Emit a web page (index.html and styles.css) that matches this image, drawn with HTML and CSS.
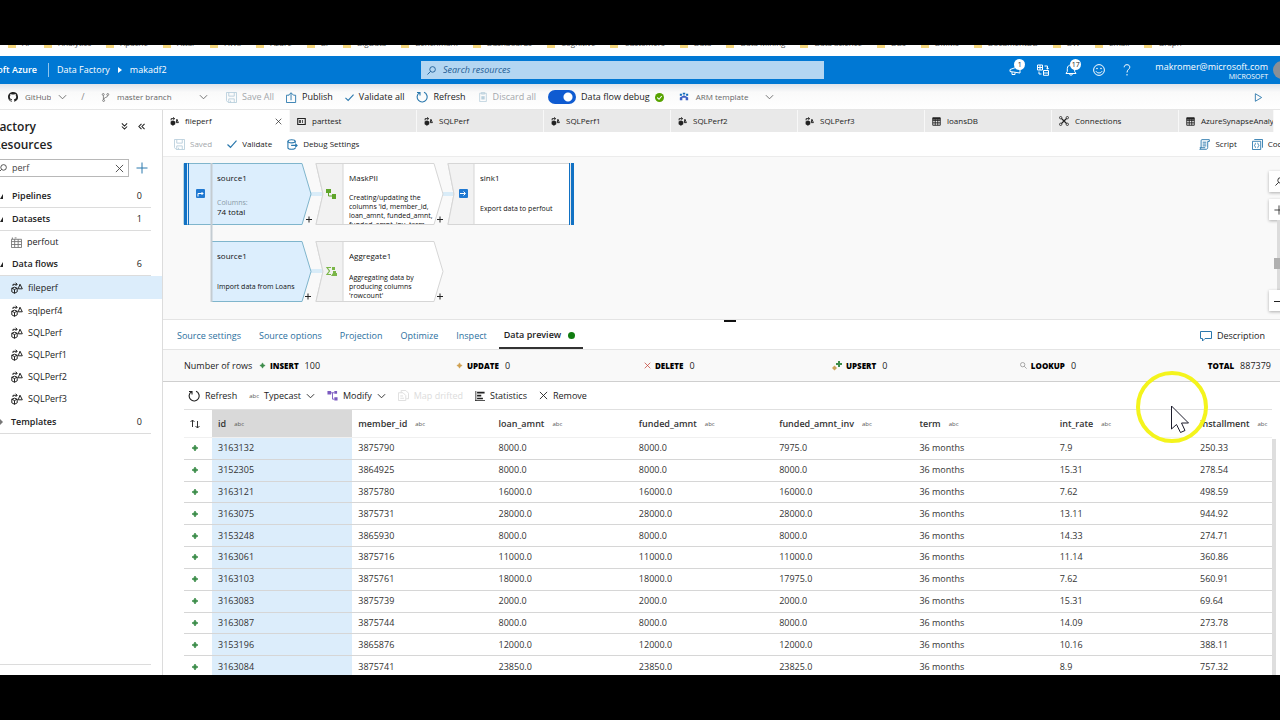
FILE: index.html
```html
<!DOCTYPE html>
<html lang="en">
<head>
  <meta charset="UTF-8">
  <meta name="viewport" content="width=device-width, initial-scale=1.0">
  <title>makadf2 - Data Factory</title>
  <link rel="stylesheet" href="styles.css">
</head>
<body>
  <!-- Icon set -->
  <svg class="sprite" aria-hidden="true">
    <symbol id="i-chevron" viewBox="0 0 10 6"><path d="M1 1l4 4 4-4" fill="none" stroke="currentColor"/></symbol>
    <symbol id="i-close" viewBox="0 0 10 10"><path d="M1 1l8 8M9 1L1 9" fill="none" stroke="currentColor"/></symbol>
    <symbol id="i-check" viewBox="0 0 10 8"><path d="M.5 4.5l3 2.8L9.5.7" fill="none" stroke="currentColor" stroke-width="1.2"/></symbol>
    <symbol id="i-save" viewBox="0 0 12 12"><path d="M.5.5h11v11h-9l-2-2zM3 .5v4h6v-4M3 11.5v-4h6v4M5 9.500v2" fill="none" stroke="currentColor"/></symbol>
    <symbol id="i-search" viewBox="0 0 10 10"><circle cx="6.200" cy="3.800" r="3.100" fill="none" stroke="currentColor"/><path d="M4 6L.5 9.500" stroke="currentColor"/></symbol>
    <symbol id="i-refresh" viewBox="0 0 12 12"><path d="M3.500 1.700A5 5 0 1 0 8 1.300M1 1.500h3v3" fill="none" stroke="currentColor" stroke-width="1.100"/></symbol>
    <symbol id="i-github" viewBox="0 0 16 16"><path fill="currentColor" fill-rule="evenodd" d="M8 0C3.580 0 0 3.580 0 8c0 3.540 2.290 6.530 5.470 7.590.4.070.550-.170.550-.380v-1.490c-2.010.370-2.530-.490-2.690-.940-.090-.230-.480-.940-.820-1.130-.280-.150-.680-.520-.010-.530.630-.010 1.080.580 1.230.820.720 1.210 1.870.870 2.330.660.070-.520.280-.870.510-1.070-1.780-.2-3.640-.890-3.640-3.950 0-.870.310-1.590.820-2.150-.080-.2-.360-1.020.080-2.120 0 0 .670-.210 2.200.820a7.600 7.600 0 0 1 4 0c1.530-1.040 2.200-.820 2.200-.820.440 1.100.160 1.920.080 2.120.510.560.820 1.270.820 2.150 0 3.070-1.870 3.750-3.650 3.950.290.250.540.730.540 1.480v2.200c0 .210.150.460.550.380A8 8 0 0 0 8 0z"/></symbol>
    <symbol id="i-branch" viewBox="0 0 10 12"><g fill="none" stroke="currentColor"><circle cx="2" cy="2" r="1.300"/><circle cx="8" cy="2" r="1.300"/><circle cx="2.500" cy="10" r="1.300"/><path d="M2.200 3.500v5M8 3.500C8 6.500 3 5 2.500 8.500"/></g></symbol>
    <symbol id="i-publish" viewBox="0 0 12 12"><path d="M3.500 3.500h-3v8h10v-8h-2.500M5.500 9V1M3 3.300L5.500.8 8 3.300" fill="none" stroke="currentColor"/></symbol>
    <symbol id="i-discard" viewBox="0 0 10 12"><path d="M1 1.500h8v10H1zM3 .5h4v2H3z" fill="none" stroke="currentColor"/><path d="M3 5h4v4H3z" fill="currentColor"/></symbol>
    <symbol id="i-flow" viewBox="0 0 12 12"><g fill="none" stroke="currentColor"><path d="M.8 6.200l2.700-1 2.700 1v3.600l-2.700 1.500-2.700-1.500zM.8 6.200l2.700 1.300 2.700-1.300M3.500 7.500v3.800M2 4V2.300h4M4.600.7L6.200 2.300 4.600 3.900M9 2.200l2.300 4.600H7.200z"/></g></symbol>
    <symbol id="i-flow-solid" viewBox="0 0 12 12"><path d="M.8 6l3-1.200L7 6v3.800l-3.200 1.700-3-1.700z" fill="currentColor"/><path d="M1.500 4.500V2.200h4M4.300.5L6.300 2.200 4.300 4M9.200 3l2 4.500H8.300z" fill="none" stroke="currentColor" stroke-width="1.300"/></symbol>
    <symbol id="i-pipe" viewBox="0 0 12 10"><path d="M1 1h10v8H1z" fill="none" stroke="currentColor" stroke-width="1.500"/><path d="M3 3h2v4H3zM7 3h1v4H7z" fill="currentColor"/></symbol>
    <symbol id="i-grid" viewBox="0 0 12 12"><path d="M1 1h10v10H1zM1 4.500h10M1 7.800h10M4.300 3v8M7.700 3v8" fill="none" stroke="currentColor" stroke-width="1.200"/><path d="M1 1h10v2.500H1z" fill="currentColor"/></symbol>
    <symbol id="i-table" viewBox="0 0 12 12"><path d="M.5 2.500h11v9H.5zM.5 5h11M.5 8.200h11M4 2.500v9M7.800 2.500v9M1.500.500v2M4 1h2" fill="none" stroke="currentColor"/></symbol>
    <symbol id="i-connect" viewBox="0 0 12 12"><g fill="none" stroke="currentColor"><circle cx="2" cy="2" r="1.400"/><circle cx="10" cy="2" r="1.400"/><circle cx="2" cy="10" r="1.400"/><circle cx="10" cy="10" r="1.400"/><path stroke-width="1.400" d="M3 3l6 6M9 3L3 9"/></g></symbol>
    <symbol id="i-debug" viewBox="0 0 12 12"><g fill="none" stroke="currentColor" stroke-width="1.200"><ellipse cx="5" cy="2.500" rx="4" ry="1.700"/><path d="M1 2.500v7c0 1 1.800 1.700 4 1.700s4-.7 4-1.700M9 2.500V4M4.500 7h6.500M9 5l2 2-2 2"/></g></symbol>
    <symbol id="i-script" viewBox="0 0 12 12"><path d="M3 .7h8.300v2H9.500v6.500c0 1.300-.8 2-1.800 2H.8c.8-.4 1.500-1 1.500-2V2C2.300 1.200 2.500.7 3 .7zM4 3.500h4M4 5.500h4M4 7.500h4M.8 9.500h6" fill="none" stroke="currentColor"/></symbol>
    <symbol id="i-code" viewBox="0 0 12 12"><path d="M2.500.500h9v9M.5 2.500h9v9h-9zM4.200 4.500c-1 0-.5 1.700-1.500 2.500 1 .8.500 2.500 1.500 2.500M6 4.500c1 0 .5 1.700 1.500 2.500-1 .8-.5 2.500-1.500 2.500" fill="none" stroke="currentColor"/></symbol>
    <symbol id="i-plus" viewBox="0 0 12 12"><path d="M6 .5v11M.5 6h11" stroke="currentColor"/></symbol>
    <symbol id="i-star" viewBox="0 0 8 8"><path d="M4 1l1 2 2 1-2 1-1 2-1-2-2-1 2-1z" fill="currentColor" stroke="currentColor" stroke-width=".8"/></symbol>
    <symbol id="i-modify" viewBox="0 0 12 12"><path d="M.5 1h4v4h-4zM8 1h3v3H8zM8 8h3.500v3.500H8z" fill="currentColor"/><path d="M4.500 3H8M6 3v7h2" fill="none" stroke="currentColor"/></symbol>
    <symbol id="i-map" viewBox="0 0 12 12"><path d="M3.500 3V.500h5l3 3v6H9M.5 3h5L8.500 6v5.500h-8zM2.500 6.500h3M2.500 9h4" fill="none" stroke="currentColor"/></symbol>
    <symbol id="i-stats" viewBox="0 0 12 12"><path d="M1 0v12M0 11.500h12" stroke="currentColor"/><path d="M2.500 1h9v2h-9zM2.500 4.500h5v2h-5zM2.500 8h7v2h-7z" fill="currentColor"/></symbol>
    <symbol id="i-chat" viewBox="0 0 12 12"><path d="M.5 1.500h11v7H5L2.500 11V8.500h-2z" fill="none" stroke="currentColor"/></symbol>
  </svg>

  <div class="app">
    <nav class="bookmarks" aria-label="Bookmarks">
      <a href="#">AI</a><a href="#">Analytics</a><a href="#">Apache</a><a href="#">Attar</a><a href="#">AWS</a><a href="#">Azure</a><a href="#">BI</a><a href="#">BigData</a><a href="#">Benchmark</a><a href="#">Dashboards</a><a href="#">Cognitive</a><a href="#">Customers</a><a href="#">Data</a><a href="#">Data Mining</a><a href="#">Data Science</a><a href="#">DBs</a><a href="#">DMMs</a><a href="#">DocumentDB</a><a href="#">DW</a><a href="#">Email</a><a href="#">Graph</a>
    </nav>

    <header class="topbar">
      <div class="brand">
        <a class="brand-name" href="#">Microsoft Azure</a>
        <a class="crumb" href="#">Data Factory</a>
        <svg class="crumb-arrow" viewBox="0 0 4 6"><path d="M0 0l4 3-4 3z" fill="#fff"/></svg>
        <a href="#">makadf2</a>
      </div>
      <label class="top-search">
        <svg class="ic-9"><use href="#i-search"/></svg>
        <input type="text" placeholder="Search resources" aria-label="Search resources">
      </label>
      <div class="top-icons">
        <button type="button" aria-label="Announcements">
          <svg class="ic-12" viewBox="0 0 12 12"><path d="M1 5.500L11 2v7L1 7.500zM3 8v2.500h3V8.300" fill="none" stroke="currentColor"/></svg>
          <span class="badge">1</span>
        </button>
        <button type="button" aria-label="Switch factory">
          <svg class="ic-12" viewBox="0 0 12 12"><path d="M.5 1h5v5h-5zM.5 3.500h5M3 1v5M6.500 6.500h5v4.800h-5zM6.500 9h5M7.500 2h3v3M9.300 4l1.200 1.200L11.700 4M4.500 10H2V7.500" fill="none" stroke="currentColor"/></svg>
        </button>
        <button type="button" aria-label="Notifications">
          <svg class="ic-12" viewBox="0 0 12 12"><path d="M1 9.500h10L9.700 7.500V4.500C9.700 2.200 8 1 6 1S2.300 2.200 2.300 4.500v3zM4.500 10c.3 1.600 2.700 1.600 3 0" fill="none" stroke="currentColor"/></svg>
          <span class="badge">17</span>
        </button>
        <button type="button" aria-label="Feedback">
          <svg class="ic-12" viewBox="0 0 12 12"><circle cx="6" cy="6" r="5.400" fill="none" stroke="currentColor"/><path d="M3 7.300c1 2.200 5 2.200 6 0" fill="none" stroke="currentColor"/><circle cx="4" cy="4.500" r=".8" fill="currentColor"/><circle cx="8" cy="4.500" r=".8" fill="currentColor"/></svg>
        </button>
        <button type="button" aria-label="Help">
          <svg class="ic-12" viewBox="0 0 12 12"><path d="M3.200 3.300C3.200 1.500 4.300.7 6 .7s2.800 1 2.800 2.500C8.800 5.200 6 5.500 6 8.500M6 10v1.500" fill="none" stroke="currentColor"/></svg>
        </button>
      </div>
      <div class="account">
        <span>makromer@microsoft.com</span>
        <span class="tenant">MICROSOFT</span>
      </div>
      <span class="avatar"></span>
    </header>

    <div class="factory-bar">
      <label class="picker repo">
        <svg class="ic-10"><use href="#i-github"/></svg>
        <select aria-label="Repository"><option>GitHub</option></select>
        <svg class="ic-chev"><use href="#i-chevron"/></svg>
      </label>
      <span class="slash">/</span>
      <label class="picker branch">
        <svg class="ic-9"><use href="#i-branch"/></svg>
        <select aria-label="Branch"><option>master branch</option></select>
        <svg class="ic-chev"><use href="#i-chevron"/></svg>
      </label>
      <button type="button" class="cmd off" disabled><svg class="ic-11"><use href="#i-save"/></svg>Save All</button>
      <button type="button" class="cmd"><svg class="ic-11 blue"><use href="#i-publish"/></svg>Publish</button>
      <button type="button" class="cmd"><svg class="ic-9 blue"><use href="#i-check"/></svg>Validate all</button>
      <button type="button" class="cmd"><svg class="ic-12 blue"><use href="#i-refresh"/></svg>Refresh</button>
      <button type="button" class="cmd off" disabled><svg class="ic-10"><use href="#i-discard"/></svg>Discard all</button>
      <label class="toggle"><input type="checkbox" checked>Data flow debug
        <svg class="ic-9" viewBox="0 0 10 10"><circle cx="5" cy="5" r="5" fill="#57a300"/><path d="M2.500 5l2 2 3-3.700" fill="none" stroke="#fff" stroke-width="1.200"/></svg>
      </label>
      <button type="button" class="cmd arm">
        <svg class="ic-10" viewBox="0 0 12 12"><path d="M1 2h2.500v2.500H1zM8.500 2H11v2.500H8.500zM4.500 1h3v2h-3z" fill="#0f6cbd"/><path d="M1 10V6.500L6 4l5 2.500V10H8V7H4v3z" fill="#3b5fc4"/></svg>
        ARM template
        <svg class="ic-chev"><use href="#i-chevron"/></svg>
      </button>
      <button type="button" class="play" aria-label="Play"><svg class="ic-9" viewBox="0 0 10 10"><path d="M1.500.8l7 4.200-7 4.200z" fill="none" stroke="currentColor"/></svg></button>
    </div>

    <div class="workspace">
      <aside class="sidebar">
        <div class="side-head">
          <h1>Factory Resources</h1>
          <button type="button" aria-label="Expand all"><svg class="ic-7" viewBox="0 0 8 8"><path d="M1 .5l3 3 3-3M1 4l3 3 3-3" fill="none" stroke="currentColor" stroke-width="1.200"/></svg></button>
          <button type="button" aria-label="Collapse"><svg class="ic-7" viewBox="0 0 8 8"><path d="M4 1L1 4l3 3M7.500 1l-3 3 3 3" fill="none" stroke="currentColor" stroke-width="1.200"/></svg></button>
        </div>
        <div class="side-search">
          <div class="filter">
            <svg class="ic-9"><use href="#i-search"/></svg>
            <input type="text" value="perf" aria-label="Filter resources">
            <button type="button" aria-label="Clear"><svg class="ic-9"><use href="#i-close"/></svg></button>
          </div>
          <button type="button" class="add" aria-label="Add resource"><svg class="ic-12"><use href="#i-plus"/></svg></button>
        </div>
        <div class="tree">
          <div class="group">Pipelines <span>0</span></div>
          <div class="group">Datasets <span>1</span></div>
          <a class="item" href="#"><svg class="ic-11 muted"><use href="#i-table"/></svg>perfout</a>
          <div class="group">Data flows <span>6</span></div>
          <a class="item selected" href="#"><svg class="ic-12"><use href="#i-flow"/></svg>fileperf</a>
          <a class="item" href="#"><svg class="ic-12"><use href="#i-flow"/></svg>sqlperf4</a>
          <a class="item" href="#"><svg class="ic-12"><use href="#i-flow"/></svg>SQLPerf</a>
          <a class="item" href="#"><svg class="ic-12"><use href="#i-flow"/></svg>SQLPerf1</a>
          <a class="item" href="#"><svg class="ic-12"><use href="#i-flow"/></svg>SQLPerf2</a>
          <a class="item" href="#"><svg class="ic-12"><use href="#i-flow"/></svg>SQLPerf3</a>
          <div class="group closed">Templates <span>0</span></div>
        </div>
        <div class="side-foot"></div>
      </aside>

      <main>
        <nav class="tabs">
          <a class="tab active" href="#"><svg class="ic-9"><use href="#i-flow-solid"/></svg>fileperf<svg class="ic-7 tab-close"><use href="#i-close"/></svg></a>
          <a class="tab" href="#"><svg class="ic-9"><use href="#i-pipe"/></svg>parttest</a>
          <a class="tab" href="#"><svg class="ic-9"><use href="#i-flow-solid"/></svg>SQLPerf</a>
          <a class="tab" href="#"><svg class="ic-9"><use href="#i-flow-solid"/></svg>SQLPerf1</a>
          <a class="tab" href="#"><svg class="ic-9"><use href="#i-flow-solid"/></svg>SQLPerf2</a>
          <a class="tab" href="#"><svg class="ic-9"><use href="#i-flow-solid"/></svg>SQLPerf3</a>
          <a class="tab" href="#"><svg class="ic-9"><use href="#i-grid"/></svg>loansDB</a>
          <a class="tab" href="#"><svg class="ic-10"><use href="#i-connect"/></svg>Connections</a>
          <a class="tab last" href="#"><svg class="ic-9"><use href="#i-grid"/></svg>AzureSynapseAnaly</a>
        </nav>

        <div class="flow-bar">
          <button type="button" class="cmd off" disabled><svg class="ic-11"><use href="#i-save"/></svg>Saved</button>
          <button type="button" class="cmd"><svg class="ic-10 blue"><use href="#i-check"/></svg>Validate</button>
          <button type="button" class="cmd"><svg class="ic-11 blue"><use href="#i-debug"/></svg>Debug Settings</button>
          <span class="spacer"></span>
          <button type="button" class="cmd"><svg class="ic-11 blue"><use href="#i-script"/></svg>Script</button>
          <button type="button" class="cmd"><svg class="ic-11 blue"><use href="#i-code"/></svg>Code</button>
        </div>

        <section class="canvas">
          <svg class="graph" width="420" height="160" viewBox="0 0 420 160">
            <path d="M147 37h14M279 37h14M147 114h14" stroke="#d9ecf8" stroke-width="4"/>
            <path d="M21 6.500h118l9 30.500-9 30.500H21z" fill="#dceefd" stroke="#7fb5cc"/>
            <path d="M21 6h3v62h-3zM25 6h1v62h-1z" fill="#1272c4"/>
            <path d="M48.500 84.500H139l9 30-9 30H48.500z" fill="#dceefd" stroke="#7fb5cc"/>
            <path d="M48.500 6v139" stroke="#c4ccd2" stroke-width="2"/>
            <path d="M153 6.500h118l9 30.500-9 30.500H153l7-30.500z" fill="#fff" stroke="#d6d6d6"/>
            <path d="M153 6.500h27v61h-27l7-30.500z" fill="#f2f2f2" stroke="#d6d6d6"/>
            <path d="M153 84.500h118l9 30-9 30H153l7-30z" fill="#fff" stroke="#d6d6d6"/>
            <path d="M153 84.500h27v60h-27l7-30z" fill="#f2f2f2" stroke="#d6d6d6"/>
            <path d="M285 6.500h122v61H285l6-30.500z" fill="#fff" stroke="#d6d6d6"/>
            <path d="M285 6.500h26v61h-26l6-30.500z" fill="#f2f2f2" stroke="#d6d6d6"/>
            <path d="M406 6h1v62h-1zM408 6h3v62h-3z" fill="#1272c4"/>
            <rect x="33" y="32" width="9" height="9" rx="1" fill="#1f78d1"/>
            <path d="M35 39.500v-3h5M38.500 35L40 36.500 38.500 38" fill="none" stroke="#fff"/>
            <rect x="296" y="32" width="9" height="9" rx="1" fill="#1f78d1"/>
            <path d="M297 36.500h5M300.500 34.500l2 2-2 2" fill="none" stroke="#fff"/>
            <path d="M163 32h5v4h-5zM169 37h4v5h-4z" fill="#5fa52a"/>
            <path d="M165.500 36v3h4" fill="none" stroke="#5fa52a"/>
            <path d="M168 110.500h-4l2.500 3.500-2.500 3.500h4" fill="none" stroke="#7ab648" stroke-width="1.200"/>
            <path d="M169 110h3v3h-3zM170 114h3v2h1v3h-6l2-3z" fill="#7ab648"/>
            <path d="M143 62.500h6M146 59.500v6M274 62.500h6M277 59.500v6M142 139.500h6M145 136.500v6M274 139.500h6M277 136.500v6" stroke="#222"/>
          </svg>
          <div class="node n-source">
            <h2>source1</h2>
            <p><span>Columns:</span><b>74 total</b></p>
          </div>
          <div class="node n-mask">
            <h2>MaskPII</h2>
            <p>Creating/updating the columns 'id, member_id, loan_amnt, funded_amnt, funded_amnt_inv, term,</p>
          </div>
          <div class="node n-sink">
            <h2>sink1</h2>
            <p>Export data to perfout</p>
          </div>
          <div class="node n-branch">
            <h2>source1</h2>
            <p>Import data from Loans</p>
          </div>
          <div class="node n-agg">
            <h2>Aggregate1</h2>
            <p>Aggregating data by producing columns 'rowcount'</p>
          </div>
          <div class="zoom-tools">
            <button type="button" aria-label="Find"><svg class="ic-9"><use href="#i-search"/></svg></button>
            <button type="button" aria-label="Zoom in"><svg class="ic-10"><use href="#i-plus"/></svg></button>
            <div class="zoom-track"><i></i></div>
            <button type="button" aria-label="Zoom out"><svg class="ic-10" viewBox="0 0 10 10"><path d="M0 5.500h10" stroke="currentColor"/></svg></button>
          </div>
        </section>

        <div class="splitter"><i></i></div>

        <nav class="panel-tabs">
          <a href="#">Source settings</a>
          <a href="#">Source options</a>
          <a href="#">Projection</a>
          <a href="#">Optimize</a>
          <a href="#">Inspect</a>
          <a class="active" href="#">Data preview<i></i></a>
          <button type="button" class="cmd describe"><svg class="ic-12 blue"><use href="#i-chat"/></svg>Description</button>
        </nav>

        <div class="counts">
          <span>Number of rows</span>
          <span class="count"><svg class="ic-7 green"><use href="#i-star"/></svg><b>INSERT</b>100</span>
          <span class="count"><svg class="ic-7 amber"><use href="#i-star"/></svg><b>UPDATE</b>0</span>
          <span class="count"><svg class="ic-7 red"><use href="#i-close"/></svg><b>DELETE</b>0</span>
          <span class="count"><svg class="ic-10" viewBox="0 0 10 10"><path d="M6 0h2v2h2v2H8v2H6V4H4V2h2z" fill="#3c8d4a"/><path d="M2.500 4.500L5 7 2.500 9.500 0 7z" fill="#c9a45c"/></svg><b>UPSERT</b>0</span>
          <span class="count"><svg class="ic-7 flip"><use href="#i-search"/></svg><b>LOOKUP</b>0</span>
          <span class="count"><b>TOTAL</b>887379</span>
        </div>

        <div class="data-bar">
          <button type="button" class="cmd"><svg class="ic-12"><use href="#i-refresh"/></svg>Refresh</button>
          <button type="button" class="cmd"><small>abc</small>Typecast<svg class="ic-chev"><use href="#i-chevron"/></svg></button>
          <button type="button" class="cmd"><svg class="ic-11 purple"><use href="#i-modify"/></svg>Modify<svg class="ic-chev"><use href="#i-chevron"/></svg></button>
          <button type="button" class="cmd faint" disabled><svg class="ic-11"><use href="#i-map"/></svg>Map drifted</button>
          <button type="button" class="cmd"><svg class="ic-10"><use href="#i-stats"/></svg>Statistics</button>
          <button type="button" class="cmd"><svg class="ic-9"><use href="#i-close"/></svg>Remove</button>
        </div>

        <div class="grid">
          <table>
            <colgroup><col class="c-mark"><col><col><col><col><col><col><col><col class="c-last"></colgroup>
            <thead>
              <tr>
                <th><svg class="ic-10" viewBox="0 0 10 10"><path d="M2.500 8V1M.5 3l2-2 2 2M7.500 2v7M5.500 7l2 2 2-2" fill="none" stroke="currentColor"/></svg></th>
                <th>id<small>abc</small></th><th>member_id<small>abc</small></th><th>loan_amnt<small>abc</small></th><th>funded_amnt<small>abc</small></th><th>funded_amnt_inv<small>abc</small></th><th>term<small>abc</small></th><th>int_rate<small>abc</small></th><th>installment<small>abc</small></th>
              </tr>
            </thead>
            <tbody>
              <tr><td><svg><use href="#i-star"/></svg></td><td>3163132</td><td>3875790</td><td>8000.0</td><td>8000.0</td><td>7975.0</td><td>36 months</td><td>7.9</td><td>250.33</td></tr>
              <tr><td><svg><use href="#i-star"/></svg></td><td>3152305</td><td>3864925</td><td>8000.0</td><td>8000.0</td><td>8000.0</td><td>36 months</td><td>15.31</td><td>278.54</td></tr>
              <tr><td><svg><use href="#i-star"/></svg></td><td>3163121</td><td>3875780</td><td>16000.0</td><td>16000.0</td><td>16000.0</td><td>36 months</td><td>7.62</td><td>498.59</td></tr>
              <tr><td><svg><use href="#i-star"/></svg></td><td>3163075</td><td>3875731</td><td>28000.0</td><td>28000.0</td><td>28000.0</td><td>36 months</td><td>13.11</td><td>944.92</td></tr>
              <tr><td><svg><use href="#i-star"/></svg></td><td>3153248</td><td>3865930</td><td>8000.0</td><td>8000.0</td><td>8000.0</td><td>36 months</td><td>14.33</td><td>274.71</td></tr>
              <tr><td><svg><use href="#i-star"/></svg></td><td>3163061</td><td>3875716</td><td>11000.0</td><td>11000.0</td><td>11000.0</td><td>36 months</td><td>11.14</td><td>360.86</td></tr>
              <tr><td><svg><use href="#i-star"/></svg></td><td>3163103</td><td>3875761</td><td>18000.0</td><td>18000.0</td><td>17975.0</td><td>36 months</td><td>7.62</td><td>560.91</td></tr>
              <tr><td><svg><use href="#i-star"/></svg></td><td>3163083</td><td>3875739</td><td>2000.0</td><td>2000.0</td><td>2000.0</td><td>36 months</td><td>15.31</td><td>69.64</td></tr>
              <tr><td><svg><use href="#i-star"/></svg></td><td>3163087</td><td>3875744</td><td>8000.0</td><td>8000.0</td><td>8000.0</td><td>36 months</td><td>14.09</td><td>273.78</td></tr>
              <tr><td><svg><use href="#i-star"/></svg></td><td>3153196</td><td>3865876</td><td>12000.0</td><td>12000.0</td><td>12000.0</td><td>36 months</td><td>10.16</td><td>388.11</td></tr>
              <tr><td><svg><use href="#i-star"/></svg></td><td>3163084</td><td>3875741</td><td>23850.0</td><td>23850.0</td><td>23825.0</td><td>36 months</td><td>8.9</td><td>757.32</td></tr>
            </tbody>
          </table>
          <div class="scrollbar"></div>
        </div>
      </main>
    </div>
  </div>

  <!-- Pointer with click highlight -->
  <svg class="pointer" width="74" height="74" viewBox="0 0 74 74">
    <circle cx="37" cy="37" r="34" fill="none" stroke="#f4f41c" stroke-width="4"/>
    <path d="M36.500 36v23l5-4.500 4 8 4.500-2-3.500-7.500h7z" fill="#fff" stroke="#1c1c2c"/>
  </svg>
</body>
</html>
```
FILE: styles.css
```css
* {
  box-sizing: border-box;
}

body {
  margin: 0;
  padding: 45px 0;
  height: 100vh;
  overflow: hidden;
  position: relative;
  background: #000;
  color: #222;
  font-family: "Open Sans", "Noto Sans", sans-serif;
  font-size: 9px;
  line-height: 14px;
}

a {
  color: inherit;
  text-decoration: none;
}

button,
input,
select {
  font: inherit;
  color: inherit;
  border: none;
  background: none;
  padding: 0;
  margin: 0;
  outline: none;
}

svg {
  display: block;
  flex: none;
}

h1, h2, p {
  margin: 0;
}

.sprite {
  position: absolute;
  width: 0;
  height: 0;
}

/* icon sizes */
.ic-7 { width: 7px; height: 7px; }
.ic-9 { width: 9px; height: 9px; }
.ic-10 { width: 10px; height: 10px; }
.ic-11 { width: 11px; height: 11px; }
.ic-12 { width: 12px; height: 12px; }
.ic-chev { width: 9px; height: 6px; }

.blue { color: #2b78ad; }
.green { color: #3c8d4a; }
.amber { color: #d0a050; }
.red { color: #c0392b; }
.purple { color: #7c5bc0; }
.muted { color: #777; }
.flip { transform: scaleX(-1); color: #888; }

.app {
  height: 100%;
  overflow: hidden;
  display: flex;
  flex-direction: column;
  background: #fff;
}

/* Browser bookmarks, mostly scrolled off */
.bookmarks {
  height: 11px;
  flex: none;
  display: flex;
  align-items: flex-start;
  gap: 15px;
  padding-left: 8px;
  overflow: hidden;
  white-space: nowrap;
  color: #555;
  font-size: 8px;
}

.bookmarks a {
  display: flex;
  gap: 6px;
  margin-top: -9px;
}

.bookmarks a::before {
  content: "";
  width: 8px;
  height: 8px;
  margin-top: 4px;
  background: #f5d67b;
}

/* Azure header */
.topbar {
  height: 28px;
  flex: none;
  display: flex;
  align-items: center;
  background: #0078d4;
  color: #fff;
}

.brand {
  width: 421px;
  display: flex;
  align-items: center;
  gap: 8px;
}

.brand-name {
  width: 49px;
  height: 14px;
  display: flex;
  justify-content: flex-end;
  padding-right: 11px;
  border-right: 1px solid #8cc4f0;
  white-space: nowrap;
  font-weight: 600;
}

.top-search {
  width: 403px;
  height: 18px;
  display: flex;
  align-items: center;
  gap: 7px;
  padding-left: 6px;
  background: #b3d6f2;
  color: #1d5c94;
}

.top-search input {
  flex: 1;
  font-size: 9px;
  font-style: italic;
}

.top-search input::placeholder {
  color: #1d5c94;
}

.crumb-arrow {
  width: 4px;
  height: 6px;
}

.top-icons {
  margin-left: auto;
  display: flex;
  gap: 16px;
}

.top-icons button {
  position: relative;
}

.badge {
  position: absolute;
  top: -5px;
  left: 5px;
  width: 11px;
  height: 11px;
  border-radius: 50%;
  background: #fff;
  color: #222;
  font-size: 7px;
  line-height: 11px;
  text-align: center;
}

.account {
  display: flex;
  flex-direction: column;
  align-items: flex-end;
  margin: 0 5px 0 22px;
  padding-top: 4px;
  line-height: 10px;
}

.tenant {
  font-size: 7px;
}

.avatar {
  width: 18px;
  height: 18px;
  margin-right: -11px;
  border-radius: 50%;
  background: radial-gradient(circle at 60% 40%, #d8d8d8 3px, #8a8f96 4px);
}

/* Commands */
.cmd {
  display: flex;
  align-items: center;
  gap: 5px;
  white-space: nowrap;
}

.off {
  color: #a3a7ab;
}

.off svg {
  color: #b9cfdc;
}

.faint {
  color: #dcdcdc;
}

.factory-bar {
  height: 26px;
  flex: none;
  display: flex;
  align-items: center;
  gap: 12px;
  padding: 1px 17px 0 8px;
  background: linear-gradient(#dfe3ea, #fafafa 8px, #fff);
  border-bottom: 1px solid #e6e6e6;
}

.picker {
  display: flex;
  align-items: center;
  color: #666;
  font-size: 8px;
}

.picker select {
  flex: 1;
  min-width: 0;
  appearance: none;
  line-height: 14px;
}

.picker .ic-10 {
  color: #222;
}

.repo {
  width: 57px;
  gap: 7px;
}

.repo select {
  flex: none;
  width: 26px;
  overflow: visible;
}

.branch {
  width: 107px;
  gap: 7px;
  margin-right: 6px;
}

.slash {
  width: 12px;
  text-align: center;
  color: #888;
}

.toggle {
  display: flex;
  align-items: center;
  gap: 5px;
  white-space: nowrap;
}

.toggle input {
  appearance: none;
  width: 28px;
  height: 14px;
  border-radius: 7px;
  background: radial-gradient(circle at 20px 7px, #fff 4px, #0f5bd1 5px);
}

.arm {
  margin-left: 3px;
  gap: 7px;
  color: #666;
  font-size: 8px;
}

.arm .ic-chev {
  margin-left: 10px;
}

.play {
  margin-left: auto;
  color: #2b78ad;
}

.workspace {
  flex: 1;
  min-height: 0;
  display: flex;
}

/* Sidebar */
.sidebar {
  width: 163px;
  flex: none;
  display: flex;
  flex-direction: column;
  padding-top: 8px;
  border-right: 1px solid #dcdcdc;
  overflow: hidden;
}

.side-head {
  display: flex;
  align-items: flex-start;
  gap: 10px;
  padding-right: 17px;
}

.side-head h1 {
  width: 80px;
  margin: 0 auto 0 -7px;
  font-size: 12px;
  font-weight: 600;
  line-height: 18px;
}

.side-head button {
  margin-top: 5px;
}

.side-search {
  display: flex;
  align-items: center;
  gap: 7px;
  margin: 5px 0 8px;
}

.filter {
  width: 129px;
  height: 18px;
  display: flex;
  align-items: center;
  gap: 5px;
  padding-right: 4px;
  border: 1px solid #b8b8b8;
  border-left: none;
  color: #444;
}

.filter .ic-9 {
  margin-left: -2px;
}

.filter input {
  flex: 1;
  min-width: 0;
}

.add {
  color: #2b78ad;
}

.group {
  height: 23px;
  display: flex;
  align-items: center;
  justify-content: space-between;
  margin-right: 11px;
  padding-right: 9px;
  border-bottom: 1px solid #dcdcdc;
  font-weight: 600;
}

.group::before {
  content: "";
  margin-right: 9px;
  border-left: 3px solid transparent;
  border-bottom: 5px solid #222;
}

.group.closed {
  margin-top: 1px;
}

.group.closed::before {
  margin-right: 8px;
  border-left: 3px solid #777;
  border-top: 3px solid transparent;
  border-bottom: 3px solid transparent;
}

.group span {
  margin-left: auto;
  font-weight: 400;
}

.item {
  height: 22px;
  display: flex;
  align-items: center;
  gap: 5px;
  padding-left: 11px;
}

.item.selected {
  height: 23px;
  margin-bottom: 1px;
  background: #dcedfb;
}

.side-foot {
  height: 11px;
  margin: auto 11px 0 0;
  border-top: 1px solid #dcdcdc;
}

/* Main column */
main {
  flex: 1;
  min-width: 0;
  display: flex;
  flex-direction: column;
}

.tabs {
  height: 22px;
  flex: none;
  display: flex;
  padding-right: 6px;
  font-size: 8px;
}

.tab {
  flex: 0 0 127px;
  display: flex;
  align-items: center;
  gap: 6px;
  padding-left: 7px;
  background: #e9e9e9;
  border-right: 1px solid #f8f8f8;
}

.tab.active {
  background: #fff;
}

.tab.last {
  flex: 1 1 0;
  min-width: 0;
  overflow: hidden;
}

.tab-close {
  margin: 0 7px 0 auto;
}

.flow-bar {
  height: 25px;
  flex: none;
  display: flex;
  align-items: center;
  gap: 15px;
  padding-left: 11px;
  margin-right: -7px;
  border-bottom: 1px solid #ececec;
  font-size: 8px;
}

.spacer {
  flex: 1;
}

/* Data flow canvas, nodes sit at free positions */
.canvas {
  height: 162px;
  flex: none;
  position: relative;
  overflow: hidden;
  background: #f9f9f9;
}

.graph {
  position: absolute;
  top: 0;
  left: 0;
}

.node {
  position: absolute;
  width: 88px;
  height: 61px;
  overflow: hidden;
  font-size: 7px;
  line-height: 9px;
  color: #111;
}

.node h2 {
  padding-top: 9px;
  font-size: 8px;
  font-weight: 400;
  line-height: 12px;
}

.n-source { left: 54px; top: 6px; }
.n-mask { left: 186px; top: 6px; }
.n-sink { left: 317px; top: 6px; }
.n-branch { left: 54px; top: 84px; }
.n-agg { left: 186px; top: 84px; }

.n-source p { margin-top: 14px; }
.n-source span { display: block; color: #8a9aa6; }
.n-source b { font-size: 8px; font-weight: 400; }
.n-mask p { margin-top: 9px; }
.n-sink p { margin-top: 20px; }
.n-branch p { margin-top: 20px; }
.n-agg p { margin-top: 11px; }

.zoom-tools {
  position: absolute;
  top: 14px;
  right: -9px;
  display: flex;
  flex-direction: column;
  align-items: center;
}

.zoom-tools button {
  width: 20px;
  height: 21px;
  display: grid;
  place-items: center;
  background: #fff;
  box-shadow: 0 1px 3px rgba(0, 0, 0, 0.3);
}

.zoom-tools button:first-child {
  margin-bottom: 7px;
}

.zoom-track {
  width: 5px;
  height: 70px;
  padding-top: 38px;
  background: #dcdcdc;
}

.zoom-track i {
  display: block;
  width: 10px;
  height: 11px;
  margin-left: -3px;
  background: #b0b0b0;
}

.splitter {
  height: 4px;
  flex: none;
  display: flex;
  justify-content: center;
  padding-left: 17px;
  border-top: 1px solid #e4e4e4;
}

.splitter i {
  width: 12px;
  height: 2px;
  background: #111;
}

/* Settings panel */
.panel-tabs {
  height: 27px;
  flex: none;
  display: flex;
  align-items: center;
  gap: 18px;
  padding: 0 15px 0 14px;
  border-bottom: 1px solid #e4e4e4;
  color: #2b6f9e;
}

.panel-tabs .active {
  align-self: stretch;
  display: flex;
  align-items: center;
  gap: 7px;
  margin-left: -6px;
  padding: 0 8px 0 5px;
  border-bottom: 2px solid #333;
  color: #222;
  font-weight: 600;
}

.panel-tabs i {
  width: 7px;
  height: 7px;
  border-radius: 50%;
  background: #107c10;
}

.describe {
  margin-left: auto;
  color: #222;
}

.counts {
  height: 32px;
  flex: none;
  display: grid;
  grid-template-columns: 75px 197px repeat(4, 1fr) auto;
  align-items: center;
  padding: 0 9px 0 21px;
  background: #f9f9f9;
  border-bottom: 1px solid #cfcfcf;
}

.count {
  display: flex;
  align-items: center;
  gap: 4px;
}

.count b {
  margin-right: 2px;
  font-size: 8px;
  font-weight: 800;
  color: #000;
}

.data-bar {
  height: 27px;
  flex: none;
  display: flex;
  align-items: center;
  gap: 12px;
  padding-left: 25px;
}

small {
  font-size: 6px;
  font-weight: 400;
  color: #555;
}

.grid {
  flex: 1;
  min-height: 0;
  display: flex;
  padding: 0 4px 0 21px;
  overflow: hidden;
}

table {
  flex: 1;
  width: 100%;
  height: 269px;
  table-layout: fixed;
  border-collapse: separate;
  border-spacing: 0;
  color: #333;
}

.c-mark { width: 28px; }
.c-last { width: 78px; }

th,
td {
  padding: 0 0 0 6px;
  text-align: left;
  white-space: nowrap;
  border-bottom: 1px solid #d6d6d6;
}

th {
  height: 29px;
  border-top: 1px solid #e0e0e0;
  border-bottom-color: #f0f0f0;
  font-weight: 600;
}

th small {
  margin-left: 8px;
  vertical-align: 1px;
}

th:nth-child(2) {
  background: #d9d9d9;
}

td:nth-child(2) {
  background: #dcedfb;
}

td svg {
  width: 8px;
  height: 8px;
  margin-left: 1px;
  color: #3c8d4a;
}

.scrollbar {
  width: 4px;
  margin-top: 30px;
  background: #dedede;
}

.pointer {
  position: absolute;
  left: 1135px;
  top: 370px;
}
```
